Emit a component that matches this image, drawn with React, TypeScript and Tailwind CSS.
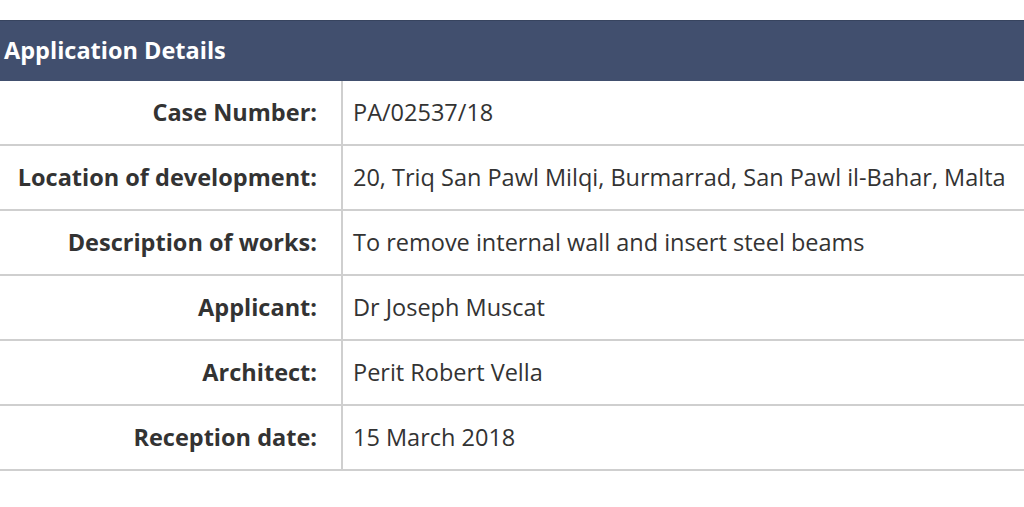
import React from 'react';

const rows = [
  { label: 'Case Number:', value: 'PA/02537/18' },
  { label: 'Location of development:', value: '20, Triq San Pawl Milqi, Burmarrad, San Pawl il-Bahar, Malta' },
  { label: 'Description of works:', value: 'To remove internal wall and insert steel beams' },
  { label: 'Applicant:', value: 'Dr Joseph Muscat' },
  { label: 'Architect:', value: 'Perit Robert Vella' },
  { label: 'Reception date:', value: '15 March 2018' },
];

export default function App() {
  return (
    <div className="w-[1024px] h-[507px] bg-white pt-[20px] font-['Open_Sans',sans-serif] text-[#333333]">
      {/* Header */}
      <div className="h-[61px] bg-[#414f6e] border-t border-[#37445f] flex items-center px-[4px]">
        <h2 className="text-[23.5px] font-bold text-white">Application Details</h2>
      </div>

      {/* Rows */}
      <div>
        {rows.map((row, idx) => (
          <div key={idx} className="grid grid-cols-[343px_1fr] h-[65px] border-b-2 border-[#cfcfcf]">
            <div className="flex items-center justify-end pr-[24px] border-r-2 border-[#cfcfcf] text-[23.5px] font-bold">
              {row.label}
            </div>
            <div className="flex items-center pl-[10px] text-[23.5px] whitespace-nowrap">
              {row.value}
            </div>
          </div>
        ))}
      </div>
    </div>
  );
}
